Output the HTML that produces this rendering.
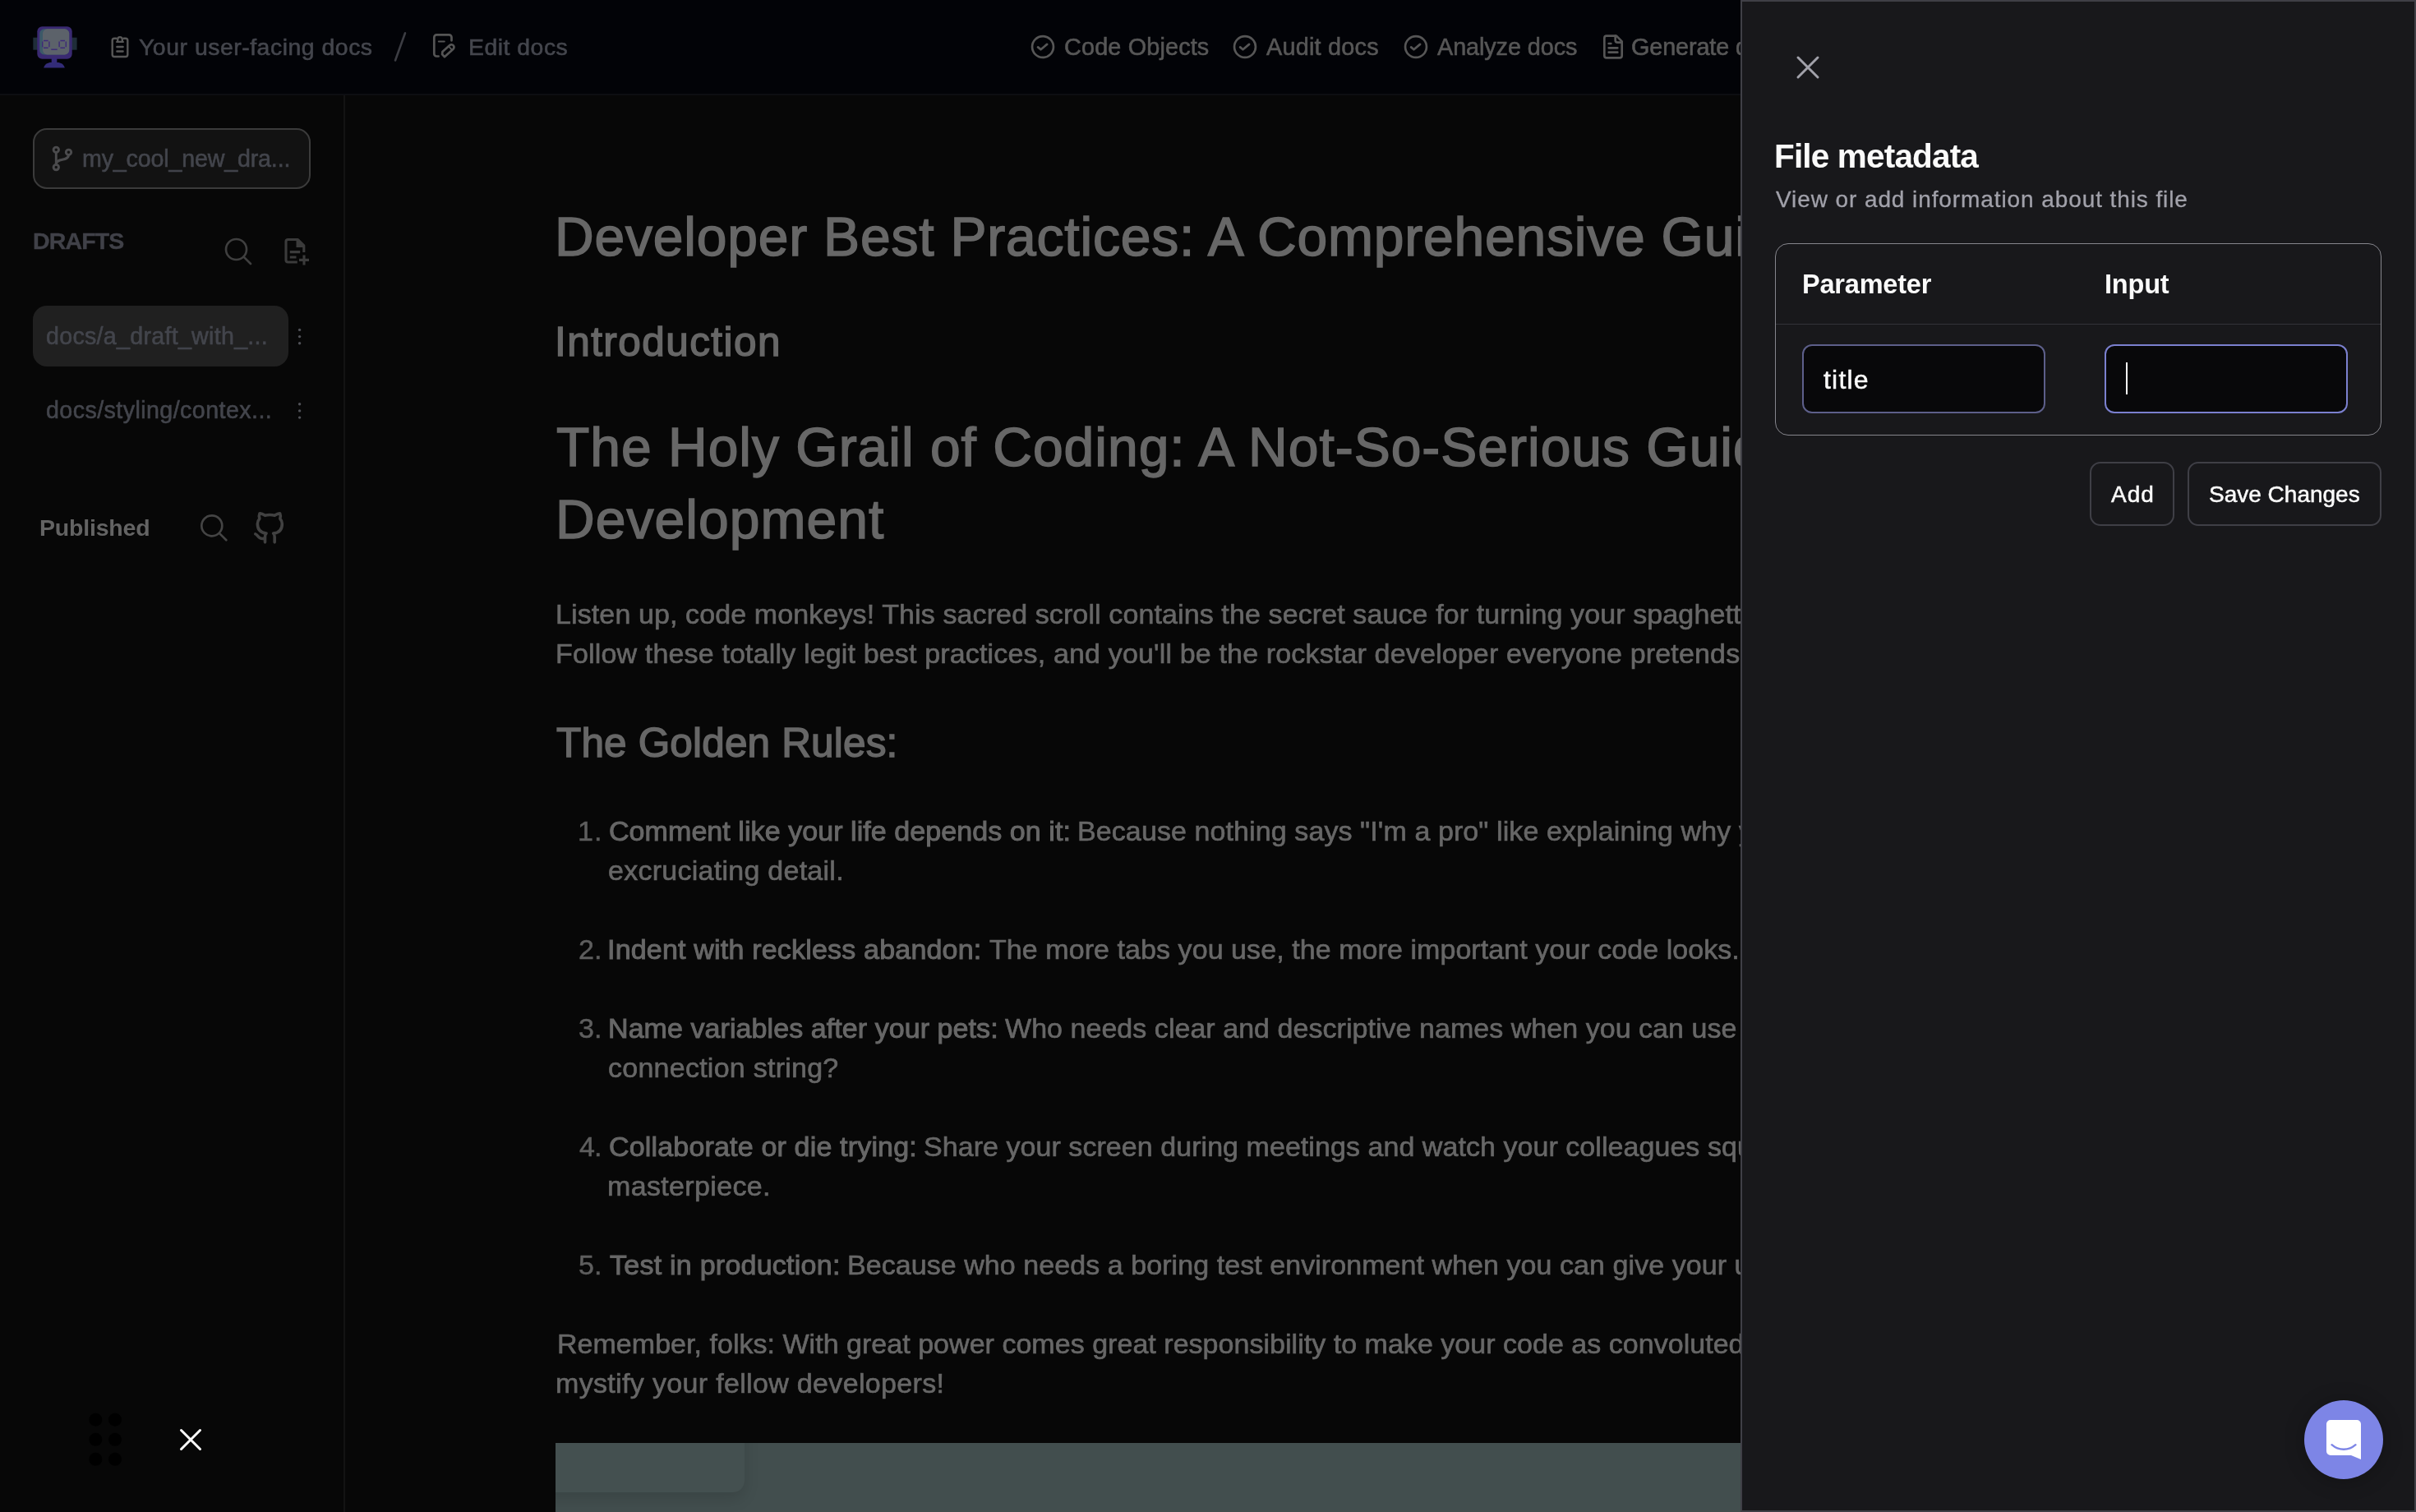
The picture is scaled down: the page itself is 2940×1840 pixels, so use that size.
<!DOCTYPE html>
<html lang="en">
<head>
<meta charset="utf-8">
<title>Edit docs - File metadata</title>
<style>
html,body{margin:0;padding:0;background:#070707;}
body{width:2940px;height:1840px;}
#root{position:relative;width:2940px;height:1840px;overflow:hidden;font-family:'Liberation Sans',sans-serif;}
.a{position:absolute;box-sizing:border-box;}
.t{position:absolute;white-space:pre;margin:0;padding:0;font-weight:400;will-change:transform;}
svg{position:absolute;overflow:visible;}
#header{left:0;top:0;width:2940px;height:116px;background:#020307;border-bottom:2px solid #0d0e12;}
#sidebar{left:0;top:116px;width:420px;height:1724px;background:#070707;border-right:2px solid #131313;}
#main{left:420px;top:116px;width:1700px;height:1724px;background:#070707;}
#branch{left:40px;top:156px;width:338px;height:74px;border:2px solid #3b3b3b;border-radius:17px;background:#121212;}
#sel{left:40px;top:372px;width:311px;height:74px;border-radius:17px;background:#202020;}
#imgclip{left:676px;top:1756px;width:1460px;height:84px;overflow:hidden;}
#panel{left:2118px;top:0;width:822px;height:1840px;background:#18181b;border:2px solid #3f3f46;z-index:4;}
#tbl{left:2160px;top:296px;width:738px;height:234px;border:1px solid #85858c;border-radius:16px;z-index:5;}
#tsep{left:2161px;top:394px;width:736px;height:1px;background:#323238;z-index:5;}
.inp{top:419px;width:296px;height:84px;border-radius:12px;background:#08080a;z-index:5;}
#in1{left:2193px;border:2px solid #5d5f8a;}
#in2{left:2561px;border:2px solid #7b80cf;}
#caret{left:2587px;top:441px;width:2px;height:39px;background:#fafafa;z-index:6;}
.btn{top:562px;height:78px;border:2px solid #3f3f46;border-radius:13px;z-index:5;}
#badd{left:2543px;width:103px;}
#bsave{left:2662px;width:236px;}
#chat{left:2804px;top:1704px;width:96px;height:96px;border-radius:50%;background:#7d85e6;z-index:6;box-shadow:0 2px 24px rgba(0,0,0,.25);}
</style>
</head>
<body>
<div id="root">
<header class="a" id="header"></header>
<aside class="a" id="sidebar"></aside>
<main class="a" id="main"></main>
<div class="a" id="branch"></div>
<div class="a" id="sel"></div>
<div class="a" id="imgclip"><div class="a" style="left:0;top:0;width:1460px;height:90px;background:#424e4e"></div><div class="a" style="left:-30px;top:-40px;width:260px;height:100px;border-radius:0 0 14px 0;background:#445050;box-shadow:0 8px 18px rgba(0,0,0,.13)"></div></div>

<!-- ICONS (dimmed layer) -->
<svg id="icons" style="left:0;top:0" width="2120" height="1840" viewBox="0 0 2120 1840" fill="none" stroke-linecap="round" stroke-linejoin="round">
  <!-- logo -->
  <g stroke="none">
    <rect x="40.3" y="45.7" width="8" height="15" fill="#1f2d38"/>
    <rect x="85.5" y="45.7" width="8.1" height="15" fill="#1f2d38"/>
    <rect x="45.3" y="32.2" width="42.4" height="39.5" rx="6" fill="#3a2a72"/>
    <rect x="48.2" y="35.3" width="36" height="31.1" rx="5.5" fill="#3c5968"/>
    <rect x="52" y="35.3" width="32.2" height="31.1" rx="5.5" fill="#5c626a"/>
    <rect x="62.7" y="71" width="6.6" height="6" fill="#352b7a"/>
    <path d="M53.2 82.5c1-4.6 5-6.6 9-6.6h7.6c4 0 8 2 9 6.6z" fill="#332c78"/>
  </g>
  <g stroke="#3d2a78" stroke-width="1.4" stroke-linecap="butt" stroke-linejoin="miter">
    <path d="M53 49.5h5.6M53 58.3h5.6M51.7 50.5v6.8M59.9 50.5v6.8"/>
    <path d="M73.4 49.5h5.6M73.4 58.3h5.6M72.1 50.5v6.8M80.3 50.5v6.8"/>
    <path d="M62.3 60.2h7.4"/>
  </g>
  <!-- clipboard-text -->
  <g stroke="#575757" stroke-width="2.4">
    <path d="M141.4 46.7h-2.2a2.5 2.5 0 0 0-2.5 2.5v17.3a2.5 2.5 0 0 0 2.5 2.5h13.6a2.5 2.5 0 0 0 2.5-2.5v-17.3a2.5 2.5 0 0 0-2.5-2.5h-2.2"/>
    <path d="M142.3 50.9h7.4M143.2 50.9v-3a2.8 2.8 0 0 1 5.6 0v3"/>
    <path d="M142.4 57h7.2M142.4 62.5h7.2"/>
  </g>
  <!-- slash -->
  <path d="M481 73.5L493 40.3" stroke="#3c3d43" stroke-width="2.6"/>
  <!-- edit doc icon -->
  <g stroke="#555" stroke-width="2.7">
    <path d="M533.6 68.5h-2.3a3 3 0 0 1-3-3v-20.1a3 3 0 0 1 3-3h15.2a3 3 0 0 1 3 3v3.9"/>
    <path d="M533.9 50.5h6.8" stroke-width="2.2"/>
    <g transform="translate(545.67 60.72) rotate(-42)">
      <path d="M-9.2 3.1v-4.2l2.2-2h12a3.1 3.1 0 0 1 0 6.2z"/>
      <path d="M3.2 -3.1v6.2" stroke-width="1.8"/>
    </g>
  </g>
  <!-- circle checks -->
  <g id="cc" stroke="#565656" stroke-width="2.7">
    <circle cx="1269" cy="57" r="12.95"/>
    <path d="M1263.1 57.4l3.4 2.9 7.6-6.4"/>
  </g>
  <g stroke="#565656" stroke-width="2.7">
    <circle cx="1515" cy="57" r="12.95"/>
    <path d="M1509.1 57.4l3.4 2.9 7.6-6.4"/>
    <circle cx="1723" cy="57" r="12.95"/>
    <path d="M1717.1 57.4l3.4 2.9 7.6-6.4"/>
  </g>
  <!-- file-text -->
  <g transform="translate(1947 41) scale(1.3333)" stroke="#565656" stroke-width="2">
    <path d="M15 2H6a2 2 0 0 0-2 2v16a2 2 0 0 0 2 2h12a2 2 0 0 0 2-2V7Z"/>
    <path d="M14 2v4a2 2 0 0 0 2 2h4"/>
    <path d="M10 9H8M16 13H8M16 17H8"/>
  </g>
  <!-- branch icon -->
  <g stroke="#4b4b4d" stroke-width="2.9">
    <circle cx="68.3" cy="182.3" r="3.2"/>
    <circle cx="68.3" cy="203.6" r="3.2"/>
    <circle cx="83.5" cy="185.3" r="3.2"/>
    <path d="M68.3 185.6v14.7"/>
    <path d="M83.5 188.6c0 8.2-15.2 3.2-15.2 11.2"/>
  </g>
  <!-- search (drafts) -->
  <g transform="translate(270 286) scale(1.6667)" stroke="#3f3f3f" stroke-width="1.6">
    <path d="m21 21-5.197-5.197m0 0A7.5 7.5 0 1 0 5.196 5.196a7.5 7.5 0 0 0 10.607 10.607Z"/>
  </g>
  <!-- file plus -->
  <g stroke="#3b3b3b" stroke-width="3.1" stroke-linecap="butt">
    <path d="M361.8 319H350.5a2.5 2.5 0 0 1-2.5-2.5V294a2.5 2.5 0 0 1 2.5-2.5H362.5L369.8 298.8V307" stroke-linejoin="round"/>
    <path d="M352.8 306.6H365.2M352.8 313H360.5"/>
    <path d="M364 316.4H376M370 310.4V322.5"/>
  </g>
  <path d="M360.5 291.5h2l8 8v1.5h-10z" fill="#3b3b3b" stroke="none"/>
  <!-- dots -->
  <g fill="#505157" stroke="none">
    <circle cx="364.6" cy="401.4" r="1.7"/><circle cx="364.6" cy="409.6" r="1.7"/><circle cx="364.6" cy="417.8" r="1.7"/>
    <circle cx="364.6" cy="491.7" r="1.7"/><circle cx="364.6" cy="499.9" r="1.7"/><circle cx="364.6" cy="508.1" r="1.7"/>
  </g>
  <!-- search (published) -->
  <g transform="translate(240.3 622.3) scale(1.6667)" stroke="#444" stroke-width="1.6">
    <path d="m21 21-5.197-5.197m0 0A7.5 7.5 0 1 0 5.196 5.196a7.5 7.5 0 0 0 10.607 10.607Z"/>
  </g>
  <!-- github -->
  <g transform="translate(307.5 623.2) scale(1.6667)" stroke="#414141" stroke-width="2.15">
    <path d="M9 19c-5 1.5-5-2.5-7-3m14 6v-3.87a3.37 3.37 0 0 0-.94-2.61c3.14-.35 6.44-1.54 6.44-7A5.44 5.44 0 0 0 20 4.77 5.07 5.07 0 0 0 19.91 1S18.73.65 16 2.48a13.38 13.38 0 0 0-7 0C6.27.65 5.09 1 5.09 1A5.07 5.07 0 0 0 5 4.77a5.44 5.44 0 0 0-1.5 3.78c0 5.42 3.3 6.61 6.44 7A3.37 3.37 0 0 0 9 18.13V22"/>
  </g>
  <!-- drag handle -->
  <g fill="#000" stroke="none">
    <circle cx="116.3" cy="1727.7" r="8"/><circle cx="140" cy="1727.7" r="8"/>
    <circle cx="116.3" cy="1751.8" r="8"/><circle cx="140" cy="1751.8" r="8"/>
    <circle cx="116.3" cy="1775.8" r="8"/><circle cx="140" cy="1775.8" r="8"/>
  </g>
  <path d="M220.5 1740.5l23 23M243.5 1740.5l-23 23" stroke="#fff" stroke-width="3"/>
</svg>

<div class="t" style="left:168.50px;top:35px;font-size:28.4px;line-height:44px;color:#44464d;letter-spacing:0.525px;z-index:1;-webkit-text-stroke:0.6px #44464d">Your user-facing docs</div>
<div class="t" style="left:570.00px;top:35px;font-size:28.4px;line-height:44px;color:#44464d;letter-spacing:0.500px;z-index:1;-webkit-text-stroke:0.6px #44464d">Edit docs</div>
<div class="t" style="left:1294.60px;top:35px;font-size:28.8px;line-height:44px;color:#575757;letter-spacing:0.164px;z-index:1;-webkit-text-stroke:0.6px #575757">Code Objects</div>
<div class="t" style="left:1541.40px;top:35px;font-size:28.8px;line-height:44px;color:#575757;letter-spacing:0.233px;z-index:1;-webkit-text-stroke:0.6px #575757">Audit docs</div>
<div class="t" style="left:1749.40px;top:35px;font-size:28.8px;line-height:44px;color:#575757;letter-spacing:-0.082px;z-index:1;-webkit-text-stroke:0.6px #575757">Analyze docs</div>
<div class="t" style="left:1985.40px;top:35px;font-size:28.8px;line-height:44px;color:#575757;letter-spacing:-0.114px;z-index:1;-webkit-text-stroke:0.6px #575757">Generate docs</div>
<div class="t" style="left:100.00px;top:171px;font-size:28.6px;line-height:44px;color:#43454c;letter-spacing:-0.147px;z-index:1;-webkit-text-stroke:0.6px #43454c">my_cool_new_dra...</div>
<div class="t" style="left:39.60px;top:271px;font-size:28.5px;line-height:44px;color:#404148;letter-spacing:-0.840px;z-index:1;font-weight:700;-webkit-text-stroke:0.4px #404148">DRAFTS</div>
<div class="t" style="left:55.70px;top:387px;font-size:28.6px;line-height:44px;color:#43454c;letter-spacing:0.295px;z-index:1;-webkit-text-stroke:0.6px #43454c">docs/a_draft_with_...</div>
<div class="t" style="left:55.70px;top:477px;font-size:28.6px;line-height:44px;color:#43454c;letter-spacing:0.443px;z-index:1;-webkit-text-stroke:0.6px #43454c">docs/styling/contex...</div>
<div class="t" style="left:48.00px;top:620px;font-size:28.5px;line-height:44px;color:#636363;letter-spacing:-0.200px;z-index:1;font-weight:700">Published</div>
<h1 class="t" style="left:675.30px;top:238px;font-size:66px;line-height:100px;color:#676767;letter-spacing:0.793px;z-index:1;-webkit-text-stroke:1.5px #676767">Developer Best Practices: A Comprehensive Guide</h1>
<h3 class="t" style="left:675.00px;top:378px;font-size:49.5px;line-height:75px;color:#676767;letter-spacing:1.436px;z-index:1;-webkit-text-stroke:1.5px #676767">Introduction</h3>
<h1 class="t" style="left:677.00px;top:494px;font-size:66px;line-height:100px;color:#676767;letter-spacing:0.987px;z-index:1;-webkit-text-stroke:1.5px #676767">The Holy Grail of Coding: A Not-So-Serious Guide to Software</h1>
<h1 class="t" style="left:675.60px;top:582px;font-size:66px;line-height:100px;color:#676767;letter-spacing:1.040px;z-index:1;-webkit-text-stroke:1.5px #676767">Development</h1>
<p class="t" style="left:676.00px;top:721px;font-size:34px;line-height:52px;color:#676767;letter-spacing:0.112px;z-index:1;-webkit-text-stroke:0.65px #676767">Listen up, code monkeys! This sacred scroll contains the secret sauce for turning your spaghetti code into a Michelin-star</p>
<p class="t" style="left:676.00px;top:769px;font-size:34px;line-height:52px;color:#676767;letter-spacing:0.160px;z-index:1;-webkit-text-stroke:0.65px #676767">Follow these totally legit best practices, and you'll be the rockstar developer everyone pretends to be.</p>
<h2 class="t" style="left:677.40px;top:866px;font-size:49.5px;line-height:75px;color:#676767;letter-spacing:0.163px;z-index:1;-webkit-text-stroke:1.5px #676767">The Golden Rules:</h2>
<p class="t" style="left:703.20px;top:985px;font-size:34px;line-height:52px;color:#5e5e5e;letter-spacing:1.000px;z-index:1;-webkit-text-stroke:0.5px #5e5e5e">1.</p>
<p class="t" style="left:740.50px;top:985px;font-size:34px;line-height:52px;color:#676767;letter-spacing:0.069px;z-index:1;-webkit-text-stroke:1.0px #676767">Comment like your life depends on it:</p>
<p class="t" style="left:1310.80px;top:985px;font-size:34px;line-height:52px;color:#676767;letter-spacing:0.096px;z-index:1;-webkit-text-stroke:0.65px #676767">Because nothing says "I'm a pro" like explaining why you wrote a for loop in</p>
<p class="t" style="left:740.00px;top:1033px;font-size:34px;line-height:52px;color:#676767;letter-spacing:0.263px;z-index:1;-webkit-text-stroke:0.65px #676767">excruciating detail.</p>
<p class="t" style="left:704.20px;top:1129px;font-size:34px;line-height:52px;color:#5e5e5e;letter-spacing:0.000px;z-index:1;-webkit-text-stroke:0.5px #5e5e5e">2.</p>
<p class="t" style="left:738.50px;top:1129px;font-size:34px;line-height:52px;color:#676767;letter-spacing:0.193px;z-index:1;-webkit-text-stroke:1.0px #676767">Indent with reckless abandon:</p>
<p class="t" style="left:1203.80px;top:1129px;font-size:34px;line-height:52px;color:#676767;letter-spacing:0.067px;z-index:1;-webkit-text-stroke:0.65px #676767">The more tabs you use, the more important your code looks.</p>
<p class="t" style="left:704.20px;top:1225px;font-size:34px;line-height:52px;color:#5e5e5e;letter-spacing:0.000px;z-index:1;-webkit-text-stroke:0.5px #5e5e5e">3.</p>
<p class="t" style="left:739.50px;top:1225px;font-size:34px;line-height:52px;color:#676767;letter-spacing:0.073px;z-index:1;-webkit-text-stroke:1.0px #676767">Name variables after your pets:</p>
<p class="t" style="left:1222.90px;top:1225px;font-size:34px;line-height:52px;color:#676767;letter-spacing:0.040px;z-index:1;-webkit-text-stroke:0.65px #676767">Who needs clear and descriptive names when you can use Fluffy for a database</p>
<p class="t" style="left:740.00px;top:1273px;font-size:34px;line-height:52px;color:#676767;letter-spacing:0.253px;z-index:1;-webkit-text-stroke:0.65px #676767">connection string?</p>
<p class="t" style="left:705.20px;top:1369px;font-size:34px;line-height:52px;color:#5e5e5e;letter-spacing:-1.000px;z-index:1;-webkit-text-stroke:0.5px #5e5e5e">4.</p>
<p class="t" style="left:740.50px;top:1369px;font-size:34px;line-height:52px;color:#676767;letter-spacing:0.172px;z-index:1;-webkit-text-stroke:1.0px #676767">Collaborate or die trying:</p>
<p class="t" style="left:1123.90px;top:1369px;font-size:34px;line-height:52px;color:#676767;letter-spacing:0.054px;z-index:1;-webkit-text-stroke:0.65px #676767">Share your screen during meetings and watch your colleagues squirm as you debug your</p>
<p class="t" style="left:739.00px;top:1417px;font-size:34px;line-height:52px;color:#676767;letter-spacing:0.345px;z-index:1;-webkit-text-stroke:0.65px #676767">masterpiece.</p>
<p class="t" style="left:704.20px;top:1513px;font-size:34px;line-height:52px;color:#5e5e5e;letter-spacing:0.000px;z-index:1;-webkit-text-stroke:0.5px #5e5e5e">5.</p>
<p class="t" style="left:741.50px;top:1513px;font-size:34px;line-height:52px;color:#676767;letter-spacing:0.244px;z-index:1;-webkit-text-stroke:1.0px #676767">Test in production:</p>
<p class="t" style="left:1030.80px;top:1513px;font-size:34px;line-height:52px;color:#676767;letter-spacing:0.062px;z-index:1;-webkit-text-stroke:0.65px #676767">Because who needs a boring test environment when you can give your users a thrill?</p>
<p class="t" style="left:678.00px;top:1609px;font-size:34px;line-height:52px;color:#676767;letter-spacing:0.029px;z-index:1;-webkit-text-stroke:0.65px #676767">Remember, folks: With great power comes great responsibility to make your code as convoluted as possible. Now go forth and</p>
<p class="t" style="left:676.00px;top:1657px;font-size:34px;line-height:52px;color:#676767;letter-spacing:0.333px;z-index:1;-webkit-text-stroke:0.65px #676767">mystify your fellow developers!</p>
<h2 class="t" style="left:2159.00px;top:159px;font-size:40.5px;line-height:62px;color:#fafafa;letter-spacing:-0.833px;z-index:6;font-weight:700">File metadata</h2>
<div class="t" style="left:2160.50px;top:221px;font-size:28px;line-height:43px;color:#a1a1aa;letter-spacing:0.908px;z-index:6;-webkit-text-stroke:0.3px #a1a1aa">View or add information about this file</div>
<div class="t" style="left:2193.00px;top:321px;font-size:32.5px;line-height:50px;color:#fafafa;letter-spacing:-0.212px;z-index:6;font-weight:700">Parameter</div>
<div class="t" style="left:2560.80px;top:321px;font-size:32.5px;line-height:50px;color:#fafafa;letter-spacing:-0.200px;z-index:6;font-weight:700">Input</div>
<div class="t" style="left:2219.00px;top:438px;font-size:32px;line-height:48px;color:#fafafa;letter-spacing:1.200px;z-index:6;-webkit-text-stroke:0.5px #fafafa">title</div>
<div class="t" style="left:2569.00px;top:580px;font-size:28px;line-height:43px;color:#fafafa;letter-spacing:1.000px;z-index:6;-webkit-text-stroke:0.5px #fafafa">Add</div>
<div class="t" style="left:2688.00px;top:580px;font-size:28px;line-height:43px;color:#fafafa;letter-spacing:0.000px;z-index:6;-webkit-text-stroke:0.5px #fafafa">Save Changes</div>

<!-- PANEL -->
<section class="a" id="panel" role="dialog" aria-label="File metadata"></section>
<div class="a" id="tbl"></div>
<div class="a" id="tsep"></div>
<div class="a inp" id="in1"></div>
<div class="a inp" id="in2"></div>
<div class="a" id="caret"></div>
<div class="a btn" id="badd"></div>
<div class="a btn" id="bsave"></div>
<div class="a" id="chat"></div>
<svg style="left:2118px;top:0;z-index:7" width="822" height="1840" viewBox="2118 0 822 1840" fill="none" stroke-linecap="round" stroke-linejoin="round">
  <path d="M2188 70l24 24M2212 70l-24 24" stroke="#a1a1aa" stroke-width="3"/>
  <path d="M2836 1728h32a5 5 0 0 1 5 5v43l-12-5h-25a5 5 0 0 1-5-5v-33a5 5 0 0 1 5-5z" fill="#fff" stroke="none"/>
  <path d="M2837.5 1758.2c8.5 7.4 20.5 7.4 29 0" stroke="#7d85e6" stroke-width="2.4"/>
</svg>
</div>
</body>
</html>
